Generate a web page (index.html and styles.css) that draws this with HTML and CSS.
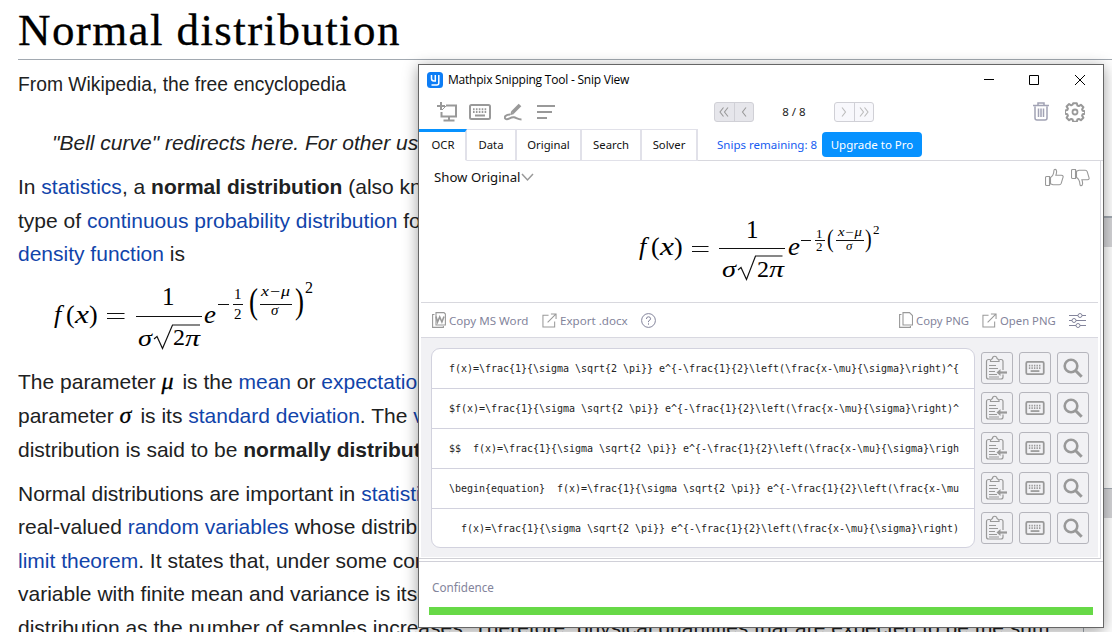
FILE: index.html
```
<!DOCTYPE html>
<html lang="en">
<head>
<meta charset="utf-8">
<title>Normal distribution</title>
<link rel="stylesheet" href="styles.css">
</head>
<body>
<svg class="defs" width="0" height="0">
  <symbol id="keyboard" viewBox="0 0 22 16"><rect x="1" y="1" width="20" height="14" rx="1.5" fill="none" stroke="currentColor" stroke-width="2"/><path d="M4 5.2h14M4 8h14" stroke="currentColor" stroke-width="2" stroke-dasharray="1.6 1.3" fill="none"/><path d="M6 11.5h10" stroke="currentColor" stroke-width="2"/></symbol>
  <symbol id="clip" viewBox="0 0 24 26"><path d="M5 4.500H3.500a2 2 0 0 0-2 2v15.500a2 2 0 0 0 2 2h12.500a2 2 0 0 0 2-2v-2.500M14.500 4.500H16a2 2 0 0 1 2 2v8.500M5.500 6.500h8.500V5l-2-1.500a2.200 2.200 0 0 0-4.500 0L5.500 5z" fill="none" stroke="currentColor" stroke-width="1.200"/><path d="M4 10.500h7M4 13.500h9M4 16.500h6M4 19.500h8M4 22h10" stroke="currentColor" stroke-width="1.100"/><path d="M14 17.500h8" stroke="currentColor" stroke-width="2.200"/><path d="M15.500 14v7L11.500 17.500z" fill="currentColor"/></symbol>
  <symbol id="search" viewBox="0 0 20 20"><circle cx="8" cy="8" r="6.300" fill="none" stroke="currentColor" stroke-width="2.600"/><path d="M12.700 12.700l6 6" stroke="currentColor" stroke-width="3"/></symbol>
  <symbol id="open" viewBox="0 0 16 16"><path d="M7 2.500H1v12.500h12.500V9M6 10L14.500 1.500M9.500 1h5.500v5.500" fill="none" stroke="currentColor" stroke-width="1.100"/></symbol>
  <symbol id="thumb" viewBox="0 0 19 19"><path d="M1.500 8.500h3v9h-3a1 1 0 0 1-1-1v-7a1 1 0 0 1 1-1zM5.500 9.500c2.200-1.200 3.200-3.500 3.400-6.500 0-2.300 2.700-2.200 2.700.6 0 1.400-.3 2.500-.7 3.600h5.600c1.500 0 1.900 1.200 1.500 2.200l-1.800 6c-.4 1.100-1 1.400-1.900 1.400H8l-2.500-1z" fill="none" stroke="currentColor" stroke-width="1.100"/></symbol>
</svg>

<main class="article">
  <h1>Normal distribution</h1>
  <p class="sub">From Wikipedia, the free encyclopedia</p>
  <p class="hatnote">"Bell curve" redirects here. For other uses</p>
  <p>In <a>statistics</a>, a <b>normal distribution</b> (also known<br>type of <a>continuous probability distribution</a> for<br><a>density function</a> is</p>
  <svg class="wiki-eq" width="270" height="70" viewBox="0 0 270 70">
    <g class="math">
      <text x="2" y="46" font-size="26" class="it">f</text>
      <text x="14" y="46" font-size="26">(</text>
      <text x="23" y="46" font-size="25" class="it" textLength="14" lengthAdjust="spacingAndGlyphs">x</text>
      <text x="37" y="46" font-size="26">)</text>
      <path d="M55 36.500h17.500M55 41.500h17.500" class="rule"/>
      <text x="110" y="28" font-size="25">1</text>
      <path d="M84 39.500h66" class="rule"/>
      <text x="86" y="69" font-size="24" class="it" textLength="14" lengthAdjust="spacingAndGlyphs">σ</text>
      <path d="M102 62l3-2.500 5.500 12 10-23.500h27.500" class="rule"/>
      <text x="121" y="68" font-size="24">2</text>
      <text x="133" y="69" font-size="24" class="it" textLength="15" lengthAdjust="spacingAndGlyphs">π</text>
      <text x="152" y="46" font-size="25" class="it" textLength="12" lengthAdjust="spacingAndGlyphs">e</text>
      <path d="M166 27.500h11M181 27.500h10M208 27.500h32" class="rule"/>
      <text x="182" y="22" font-size="15">1</text><text x="182" y="42" font-size="15">2</text>
      <text transform="translate(197 36) scale(.75 1)" font-size="36">(</text>
      <text x="209" y="19" font-size="14" class="it" textLength="29" lengthAdjust="spacingAndGlyphs">x−μ</text>
      <text x="219" y="38" font-size="15" class="it">σ</text>
      <text transform="translate(243 36) scale(.75 1)" font-size="36">)</text>
      <text x="253" y="16" font-size="16">2</text>
    </g>
  </svg>
  <p class="after">The parameter <i class="sym">μ</i> is the <a>mean</a> or <a>expectation</a><br>parameter <i class="sym sigma">σ</i> is its <a>standard deviation</a>. The <a>variance</a><br>distribution is said to be <b>normally distributed</b></p>
  <p>Normal distributions are important in <a>statistics</a><br>real-valued <a>random variables</a> whose distributions<br><a>limit theorem</a>. It states that, under some conditions<br>variable with finite mean and variance is itself<br>distribution as the number of samples increases. Therefore, physical quantities that are expected to be the sum</p>
</main>
<div class="edge edge-a"></div><div class="edge edge-b"></div><div class="edge-line"></div>

<section class="window">
  <header class="titlebar">
    <svg class="logo" width="16" height="16"><rect width="16" height="16" rx="3.500" fill="#0d7df5"/><path d="M4.500 3v3.500q0 2.500 2.500 2.500h2M8.300 3v6M11.800 3v8q0 2-2 2H4.500" fill="none" stroke="#fff" stroke-width="1.500"/></svg>
    <span class="title">Mathpix Snipping Tool - Snip View</span>
    <svg class="controls" width="104" height="12"><path d="M1 5.500h10M46.500 1.500h9v9h-9zM92 1l10 10M102 1L92 11" fill="none" stroke="#000"/></svg>
  </header>
  <div class="toolbar">
    <svg width="20" height="20"><path d="M9 3.500h10v11H4.500V10M12 15v3M6.500 18.500h11" fill="none" stroke="currentColor" stroke-width="2"/><path d="M4 0v8M0 4h8" stroke="currentColor" stroke-width="2"/><path d="M5 8l4-4" stroke="currentColor"/></svg>
    <svg class="keys" width="22" height="16"><use href="#keyboard"/></svg>
    <svg class="pen" width="18" height="20"><path d="M8.500 10.500L16 3" stroke="currentColor" stroke-width="3.800"/><path d="M7.300 9l2.900 2.900-4.200 1.300z" fill="currentColor"/><path d="M6 12.500c-4 0-6.500 2.500-4.500 4.300 2.500 2 5-2.400 8.500-1.500 2.500.7 4 2.200 7.500 2.200" fill="none" stroke="currentColor" stroke-width="2"/></svg>
    <svg class="menu" width="18" height="14"><path d="M0 1h18M0 7h15M0 13h10" stroke="currentColor" stroke-width="2.200"/></svg>
    <div class="pager prev"><span><svg width="10" height="10"><path d="M4.500.5L1 5l3.500 4.500M9 .5L5.500 5 9 9.500"/></svg></span><span><svg width="6" height="10"><path d="M5 .5L1.500 5 5 9.500"/></svg></span></div>
    <span class="count">8 / 8</span>
    <div class="pager next"><span><svg width="6" height="10"><path d="M1 .5L4.500 5 1 9.500"/></svg></span><span><svg width="10" height="10"><path d="M1 .5L4.500 5 1 9.500M5.500.5L9 5 5.500 9.500"/></svg></span></div>
    <svg class="trash" width="16" height="19"><path d="M0 3.500h16M5 3V1h6v2M2 4.500V16q0 2 2 2h8q2 0 2-2V4.500M5.500 6.500V15M8 6.500V15M10.500 6.500V15" fill="none" stroke="currentColor" stroke-width="1.500"/></svg>
    <svg class="gear" width="20" height="20" viewBox="-10 -10 20 20"><path d="M-1.800-8.800h3.600l.6 2.300 1.400.6 2.100-1.300 2.500 2.500-1.300 2.100.6 1.400 2.300.6v2.200l-2.300.6-.6 1.400 1.300 2.100-2.500 2.500-2.100-1.300-1.400.6-.6 2.300h-3.600l-.6-2.300-1.400-.6-2.100 1.300-2.500-2.500 1.300-2.100-.6-1.400-2.300-.6V-1.400l2.300-.6.600-1.400-1.300-2.100 2.500-2.500 2.100 1.300 1.400-.6z" fill="none" stroke="currentColor" stroke-width="2" stroke-linejoin="round"/><circle r="2.500" fill="none" stroke="currentColor" stroke-width="1.800"/></svg>
  </div>
  <nav class="tabs">
    <span class="tab active">OCR</span><span class="tab t2">Data</span><span class="tab t3">Original</span><span class="tab t4">Search</span><span class="tab t5">Solver</span>
    <span class="remaining">Snips remaining: 8</span><button class="upgrade">Upgrade to Pro</button>
  </nav>
  <div class="pane">
    <div class="show"><span class="show-label">Show Original</span><svg width="14" height="9"><path d="M1 1l5.500 6L12 1" fill="none" stroke="#999" stroke-width="1.500"/></svg>
      <div class="thumbs"><svg width="19" height="19"><use href="#thumb"/></svg><svg class="down" width="19" height="19"><use href="#thumb"/></svg></div>
    </div>
    <div class="preview">
      <svg width="250" height="70" viewBox="0 0 250 70">
        <g class="math">
          <text x="3" y="39" font-size="26" class="it">f</text>
          <text x="15" y="39" font-size="26">(</text>
          <text x="24" y="39" font-size="25" class="it" textLength="14" lengthAdjust="spacingAndGlyphs">x</text>
          <text x="38" y="39" font-size="26">)</text>
          <path d="M56 30.500h16.500M56 35.500h16.500" class="rule"/>
          <text x="110" y="22" font-size="25">1</text>
          <path d="M83 32.500h66" class="rule"/>
          <text x="86" y="61" font-size="24" class="it" textLength="14" lengthAdjust="spacingAndGlyphs">σ</text>
          <path d="M102 54l3-2.500 5.500 12 9-23.500h27" class="rule"/>
          <text x="121" y="61" font-size="24">2</text>
          <text x="133" y="61" font-size="24" class="it" textLength="15" lengthAdjust="spacingAndGlyphs">π</text>
          <text x="152" y="39" font-size="25" class="it" textLength="12" lengthAdjust="spacingAndGlyphs">e</text>
          <path d="M165 24.500h10M179 24.500h10M200 24.500h28" class="rule"/>
          <text x="180" y="21.500" font-size="13">1</text><text x="180" y="35" font-size="13">2</text>
          <text transform="translate(191 31) scale(.8 1)" font-size="25">(</text>
          <text x="202" y="20" font-size="12" class="it" textLength="24" lengthAdjust="spacingAndGlyphs">x−μ</text>
          <text x="210" y="34" font-size="13" class="it">σ</text>
          <text transform="translate(229 31) scale(.8 1)" font-size="25">)</text>
          <text x="237" y="18" font-size="13">2</text>
        </g>
      </svg>
    </div>
    <div class="actions">
      <svg width="14" height="16"><path d="M4 .6h8l1.400 1.400v11H4zM2.500 2.500H.6v12.900h10.800V14" fill="none" stroke="#999" stroke-width="1.100"/><path d="M4 4.500l1.500 5.500 2.200-5 2.200 5L12 4.500" fill="none" stroke="#999" stroke-width="1.600"/></svg>
      <span class="l1">Copy MS Word</span>
      <svg class="ic2" width="15" height="15"><use href="#open"/></svg><span class="l2">Export .docx</span>
      <svg class="help" width="15" height="15"><circle cx="7.500" cy="7.500" r="6.900" fill="none" stroke="currentColor"/><path d="M5.400 6q0-2.200 2.100-2.200T9.600 5.800Q9.600 7 7.500 8v1.200M7.500 10.300v1.400" fill="none" stroke="currentColor"/></svg>
      <svg class="ic3" width="14" height="16"><path d="M4 .6h6.500l3 3V13H4zM2.500 2.500H.6v12.900h10.800V14" fill="none" stroke="#999" stroke-width="1.100"/></svg><span class="l3">Copy PNG</span>
      <svg class="ic4" width="15" height="15"><use href="#open"/></svg><span class="l4">Open PNG</span>
      <svg class="sliders" width="17" height="15"><path d="M0 2.500h9M13 2.500h4M0 7.500h3M7 7.500h10M0 12.500h7M11 12.500h6" stroke="currentColor"/><g fill="none" stroke="currentColor"><circle cx="11" cy="2.500" r="2"/><circle cx="5" cy="7.500" r="2"/><circle cx="9" cy="12.500" r="2"/></g></svg>
    </div>
    <div class="results">
      <div class="codes">
        <code>f(x)=\frac{1}{\sigma \sqrt{2 \pi}} e^{-\frac{1}{2}\left(\frac{x-\mu}{\sigma}\right)^{</code>
        <code>$f(x)=\frac{1}{\sigma \sqrt{2 \pi}} e^{-\frac{1}{2}\left(\frac{x-\mu}{\sigma}\right)^</code>
        <code>$$  f(x)=\frac{1}{\sigma \sqrt{2 \pi}} e^{-\frac{1}{2}\left(\frac{x-\mu}{\sigma}\righ</code>
        <code>\begin{equation}  f(x)=\frac{1}{\sigma \sqrt{2 \pi}} e^{-\frac{1}{2}\left(\frac{x-\mu</code>
        <code>  f(x)=\frac{1}{\sigma \sqrt{2 \pi}} e^{-\frac{1}{2}\left(\frac{x-\mu}{\sigma}\right)</code>
      </div>
      <div class="buttons">
        <span><svg width="24" height="26"><use href="#clip"/></svg></span><span><svg width="20" height="14"><use href="#keyboard"/></svg></span><span><svg width="20" height="20"><use href="#search"/></svg></span>
        <span><svg width="24" height="26"><use href="#clip"/></svg></span><span><svg width="20" height="14"><use href="#keyboard"/></svg></span><span><svg width="20" height="20"><use href="#search"/></svg></span>
        <span><svg width="24" height="26"><use href="#clip"/></svg></span><span><svg width="20" height="14"><use href="#keyboard"/></svg></span><span><svg width="20" height="20"><use href="#search"/></svg></span>
        <span><svg width="24" height="26"><use href="#clip"/></svg></span><span><svg width="20" height="14"><use href="#keyboard"/></svg></span><span><svg width="20" height="20"><use href="#search"/></svg></span>
        <span><svg width="24" height="26"><use href="#clip"/></svg></span><span><svg width="20" height="14"><use href="#keyboard"/></svg></span><span><svg width="20" height="20"><use href="#search"/></svg></span>
      </div>
    </div>
  </div>
  <footer class="footer"><div class="conf">Confidence</div><div class="bar"></div></footer>
</section>
</body>
</html>
```
FILE: styles.css
```
* { box-sizing: border-box; }
body { margin: 0; width: 1112px; height: 632px; overflow: hidden; background: #fff; position: relative; }
svg { display: block; flex: none; }
.defs { position: absolute; }

.article { padding-left: 18px; height: 632px; overflow: hidden; font: 21px/33.6px "Liberation Sans", Arial, sans-serif; color: #202122; white-space: nowrap; }
.article a { color: #1144aa; }
.article p { margin: 0 0 10.5px; }
h1 { margin: 0; height: 60px; border-bottom: 1px solid #a2a9b1; font: 45px/60px "Liberation Serif", Georgia, serif; color: #000; letter-spacing: 1.4px; -webkit-text-stroke: .3px #000; }
.article .sub { font-size: 19.3px; line-height: 30px; margin: 10px 0 26px; }
.article .hatnote { padding-left: 34px; font-style: italic; }
.wiki-eq { margin: -4px 0 0 34px; overflow: visible; }
.article .after { margin-top: 18px; }
.sym { display: inline-block; width: 15px; font: italic 24px/20px "Liberation Serif", serif; color: #000; -webkit-text-stroke: .3px #000; }
.sigma { width: 15px; }
.math { font-family: "Liberation Serif", serif; fill: #000; }
.it { font-style: italic; }
.rule { fill: none; stroke: #111; stroke-width: 1.2; }

.edge { position: absolute; right: 0; width: 12px; height: 30px; background: #d5d5d8; border-top: 1px solid #a2a9b1; }
.edge-a { top: 216px; height: 31px; border-top-width: 2px; }
.edge-b { top: 488px; }
.edge-line { position: absolute; left: 1083px; top: 620px; height: 12px; width: 1px; background: #a2a9b1; }

.window { position: absolute; left: 418px; top: 64px; width: 686px; height: 564px; border: 1px solid #666; background: #fff; box-shadow: 0 3px 14px rgba(0,0,0,.38); font-family: "Noto Sans", sans-serif; color: #111; white-space: nowrap; }
.titlebar { display: flex; align-items: center; height: 29px; padding: 0 16px 0 8px; }
.title { margin-left: 5px; font: 12px/20px "Open Sans", sans-serif; letter-spacing: -.22px; color: #000; }
.controls { margin-left: auto; }
.toolbar { display: flex; align-items: center; height: 35px; padding: 0 18px 0 18px; color: #999; }
.toolbar > svg + svg { margin-left: 13px; }
.toolbar > .keys { margin-left: 12px; }
.toolbar > .menu { margin-left: 15px; }
.pager { display: flex; width: 40px; height: 20px; border: 1px solid #d0d0d6; border-radius: 3px; background: #e6e6eb; }
.pager span { flex: 1; display: flex; align-items: center; justify-content: center; }
.pager span + span { border-left: 1px solid #d0d0d6; }
.pager path { fill: none; stroke: #999; stroke-width: 1.1; }
.next { background: #f8f8fc; }
.pager.next path { stroke: #bbb; }
.prev { margin-left: 159px; }
.count { width: 80px; text-align: center; font-size: 11.5px; color: #222; }
.toolbar .trash { margin-left: auto; color: #a1a2b4; }
.toolbar > .gear { margin-left: 16px; }
.tabs { display: flex; height: 32px; border-bottom: 1px solid #d8d8de; font-size: 11.3px; }
.tab { display: flex; align-items: center; justify-content: center; width: 50px; height: 32px; border: 1px solid #e1e1e9; border-left: 0; border-right-width: 2px; padding-bottom: 2px; }
.tab.active { width: 48px; border-top: 3px solid #0792ff; border-bottom-color: #fff; padding: 0 0 3px 2px; }
.t3 { width: 65px; } .t4 { width: 60px; } .t5 { width: 56px; }
.remaining { line-height: 31px; margin-left: 19px; color: #155bf0; width: 105px; font-size: 11.5px; }
.upgrade { width: 100px; height: 25px; margin-top: 3px; padding: 0; border: 0; border-radius: 4px; background: #0792ff; color: #fff; font: 11.5px "Noto Sans", sans-serif; }
.pane { width: 682px; height: 398px; padding: 0 2px 2px; border-right: 1px solid #d8d8de; border-bottom: 1px solid #d0d0d5; }
.show { display: flex; align-items: center; height: 32px; padding: 0 8px 0 13px; font-size: 13.2px; }
.thumbs { display: flex; gap: 7px; margin-left: auto; color: #999; }
.down { transform: scaleY(-1); }
.preview { display: flex; justify-content: center; height: 110px; padding: 23px 0 0 2px; border-bottom: 1px solid #d8d8de; }
.actions { display: flex; align-items: center; height: 35px; padding: 0 12px 0 11px; color: #83849b; font-size: 11.6px; border-bottom: 1px solid #d8d8e0; }
.actions .l1 { margin-left: 3px; width: 80px; }
.ic2 { margin-left: 13px; } .l2 { width: 67px; margin-left: 3px; }
.actions .ic2, .actions .ic4 { color: #999; }
.help { margin-left: 14px; }
.ic3 { margin-left: auto; } .l3 { margin-left: 3px; width: 53px; }
.ic4 { margin-left: 13px; } .l4 { margin-left: 3px; width: 56px; }
.l3, .l4 { font-size: 11.3px; }
.sliders { margin-left: 13px; }
.results { display: flex; height: 219px; padding: 10px 0 0 10px; background: #f1f1f4; }
.codes { width: 544px; height: 200px; border: 1px solid #d2d2de; border-radius: 9px; background: #fff; overflow: hidden; }
.codes code { display: block; height: 40px; padding-left: 17px; border-bottom: 1px solid #d2d2de; font: 10px/39px "DejaVu Sans Mono", monospace; letter-spacing: -.02px; white-space: pre; color: #222; }
.codes code:last-child { border: 0; }
.buttons { display: grid; grid-template-columns: repeat(3, 32px); grid-auto-rows: 32px; gap: 8px 6px; margin: 4px 0 0 6px; color: #999; }
.buttons span { display: flex; align-items: center; justify-content: center; border: 1px solid #b5b5bc; border-radius: 3px; }
.footer { margin-top: 2px; border-top: 1px solid #d0d0d8; padding: 15px 10px 0; }
.conf { padding-left: 3px; font-size: 11.7px; line-height: 20px; color: #83849b; }
.bar { height: 8px; margin-top: 10px; background: #67d947; }
```
